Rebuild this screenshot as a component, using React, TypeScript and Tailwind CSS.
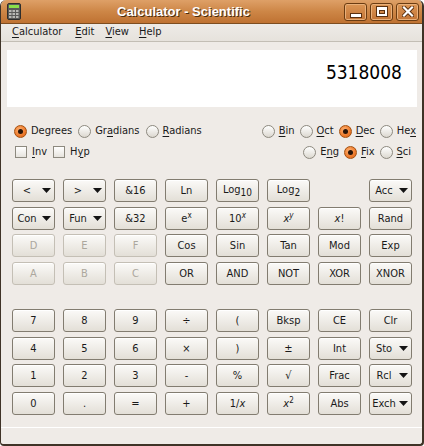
import React from 'react';

// Calculator - Scientific window (GNOME Human theme look)

type Cell = { label: React.ReactNode; dd?: boolean; off?: boolean } | null;

function Mn({ text, at }: { text: string; at: number }) {
  return (
    <span>
      {text.slice(0, at)}
      <span className="underline underline-offset-[2px] decoration-[1px]">{text[at]}</span>
      {text.slice(at + 1)}
    </span>
  );
}

function Sup({ base, exp, italicExp }: { base: React.ReactNode; exp: string; italicExp?: boolean }) {
  return (
    <span className="flex items-start">
      <span>{base}</span>
      <span className={`text-[8px] leading-none -mt-[1px] ${italicExp ? 'italic' : ''}`}>{exp}</span>
    </span>
  );
}

function Sub({ base, sub }: { base: string; sub: string }) {
  return (
    <span className="relative -top-[1px]">
      {base}
      <span className="relative top-[3px] text-[10px]">{sub}</span>
    </span>
  );
}

function Arrow() {
  return (
    <svg width="9" height="5" viewBox="0 0 9 5" className="shrink-0">
      <path d="M0 0h9L4.5 5z" fill="#141414" />
    </svg>
  );
}

function Key({ cell }: { cell: Cell }) {
  if (!cell) return <div />;
  const { label, dd, off } = cell;
  return (
    <div
      className={`h-[23px] rounded-[3px] border flex items-center text-[11px] leading-none bg-linear-to-b from-[#fbfaf8] to-[#e3dfd7] shadow-[inset_0_1px_0_#ffffff] ${
        off ? 'border-[#c4bfb5] text-[#aca79d]' : 'border-[#827c70] text-[#1a1a1a]'
      }`}
    >
      {dd ? (
        <>
          <span className="flex-1 text-center">{label}</span>
          <span className="mr-[3px] ml-[1px] flex"><Arrow /></span>
        </>
      ) : (
        <span className="flex-1 flex justify-center">{label}</span>
      )}
    </div>
  );
}

function Radio({ on }: { on?: boolean }) {
  return on ? (
    <span className="w-[13px] h-[13px] rounded-full border border-[#a4500f] bg-[radial-gradient(circle_at_40%_35%,#ffb273,#ee7a2b_60%,#d6611b)] flex items-center justify-center shrink-0">
      <span className="w-[5px] h-[5px] rounded-full bg-[#2a1408]" />
    </span>
  ) : (
    <span className="w-[13px] h-[13px] rounded-full border border-[#8d897f] bg-linear-to-b from-white to-[#dcd8d0] shrink-0" />
  );
}

function Check() {
  return <span className="w-[12px] h-[12px] border border-[#8d897f] bg-linear-to-b from-white to-[#e6e3dd] shrink-0" />;
}

function Opt({ on, text, at }: { on?: boolean; text: string; at?: number }) {
  return (
    <span className="flex items-center gap-[4px]">
      <Radio on={on} />
      {at === undefined ? <span>{text}</span> : <Mn text={text} at={at} />}
    </span>
  );
}

const X = <span className="italic">x</span>;

const TOP: Cell[] = [
  { label: '<', dd: true }, { label: '>', dd: true }, { label: '&16' }, { label: 'Ln' },
  { label: <Sub base="Log" sub="10" /> }, { label: <Sub base="Log" sub="2" /> }, null, { label: 'Acc', dd: true },
  { label: 'Con', dd: true }, { label: 'Fun', dd: true }, { label: '&32' }, { label: <Sup base="e" exp="x" /> },
  { label: <Sup base="10" exp="x" italicExp /> }, { label: <Sup base={X} exp="y" italicExp /> }, { label: <span>{X}!</span> }, { label: 'Rand' },
  { label: 'D', off: true }, { label: 'E', off: true }, { label: 'F', off: true }, { label: 'Cos' },
  { label: 'Sin' }, { label: 'Tan' }, { label: 'Mod' }, { label: 'Exp' },
  { label: 'A', off: true }, { label: 'B', off: true }, { label: 'C', off: true }, { label: 'OR' },
  { label: 'AND' }, { label: 'NOT' }, { label: 'XOR' }, { label: 'XNOR' },
];

const BOTTOM: Cell[] = [
  { label: '7' }, { label: '8' }, { label: '9' }, { label: '÷' },
  { label: '(' }, { label: 'Bksp' }, { label: 'CE' }, { label: 'Clr' },
  { label: '4' }, { label: '5' }, { label: '6' }, { label: '×' },
  { label: ')' }, { label: '±' }, { label: 'Int' }, { label: 'Sto', dd: true },
  { label: '1' }, { label: '2' }, { label: '3' }, { label: '-' },
  { label: '%' }, { label: '√' }, { label: 'Frac' }, { label: 'Rcl', dd: true },
  { label: '0' }, { label: '.' }, { label: '=' }, { label: '+' },
  { label: <span>1/{X}</span> }, { label: <Sup base={X} exp="2" /> }, { label: 'Abs' }, { label: 'Exch', dd: true },
];

function TitleButton({ children }: { children: React.ReactNode }) {
  return (
    <div className="w-[23px] h-[18px] rounded-[3px] border border-[#6b3c12] shadow-[inset_0_0_0_1px_#e9b07a] bg-linear-to-b from-[#dc9655] to-[#c37536] flex items-center justify-center">
      {children}
    </div>
  );
}

function CalcIcon() {
  return (
    <svg width="14" height="17" viewBox="0 0 14 17">
      <rect x="0.5" y="0.5" width="13" height="16" rx="1.5" fill="#5a5a58" stroke="#2e2e2c" />
      <rect x="2" y="2" width="10" height="3" fill="#8be04a" />
      {[0, 1, 2].map((c) =>
        [0, 1, 2].map((r) => (
          <rect key={`${c}-${r}`} x={2 + c * 3.5} y={7 + r * 3} width="2.5" height="2" fill="#b8b8b4" />
        ))
      )}
    </svg>
  );
}

export default function App() {
  return (
    <div className="w-[424px] h-[446px] overflow-hidden bg-white font-['DejaVu_Sans_Condensed','DejaVu_Sans',sans-serif] text-[11px] text-[#1a1a1a]">
      <div className="h-full flex flex-col rounded-t-[6px] rounded-b-[4px] border-l border-r-2 border-b-2 border-[#3f3327] bg-[#efebe7] overflow-hidden">
        {/* Barre de titre */}
        <div className="h-[24px] shrink-0 relative flex items-center bg-linear-to-b from-[#dea067] via-[#cd8646] to-[#bf7232] border-b border-[#7d4d20]">
          <span className="ml-[6px] flex"><CalcIcon /></span>
          <span className="absolute left-[116px] top-[4px] font-['Liberation_Sans',sans-serif] font-bold text-[13px] leading-[15px] text-white [text-shadow:1px_1px_0_#4a2c10]">
            Calculator - Scientific
          </span>
          <div className="ml-auto mr-[3px] flex gap-[3px]">
            <TitleButton>
              <span className="w-[10px] h-[3px] mt-[7px] bg-white outline outline-1 outline-[#5a3010]" />
            </TitleButton>
            <TitleButton>
              <span className="w-[10px] h-[9px] border-2 border-t-[3px] border-white outline outline-1 outline-[#5a3010] shadow-[inset_0_0_0_1px_#5a3010]" />
            </TitleButton>
            <TitleButton>
              <svg width="12" height="11" viewBox="0 0 12 11">
                <path d="M2 1.5l8 8M10 1.5l-8 8" stroke="#5a3010" strokeWidth="4" strokeLinecap="square" />
                <path d="M2 1.5l8 8M10 1.5l-8 8" stroke="#ffffff" strokeWidth="2.2" strokeLinecap="square" />
              </svg>
            </TitleButton>
          </div>
        </div>

        {/* Menu */}
        <div className="h-[18px] shrink-0 flex items-center border-b border-[#c3beb5] bg-linear-to-b from-[#eeebe7] to-[#e6e2dc]">
          <span className="ml-[11px]"><Mn text="Calculator" at={0} /></span>
          <span className="ml-[13px]"><Mn text="Edit" at={0} /></span>
          <span className="ml-[11px]"><Mn text="View" at={0} /></span>
          <span className="ml-[10px]"><Mn text="Help" at={0} /></span>
        </div>

        {/* Affichage */}
        <div className="mt-[8px] ml-[6px] w-[410px] h-[57px] shrink-0 bg-white flex items-start justify-end pr-[15px] pt-[11px]">
          <span className="text-[19px] leading-[22px] text-black">5318008</span>
        </div>

        {/* Options */}
        <div className="mt-[17px] h-[14px] flex items-center justify-between pl-[13px] pr-[6px]">
          <div className="flex items-center gap-[6px]">
            <Opt on text="Degrees" />
            <Opt text="Gradians" at={2} />
            <Opt text="Radians" at={0} />
          </div>
          <div className="flex items-center gap-[5px]">
            <Opt text="Bin" at={0} />
            <Opt text="Oct" at={0} />
            <Opt on text="Dec" at={0} />
            <Opt text="Hex" at={2} />
          </div>
        </div>
        <div className="mt-[7px] h-[14px] flex items-center justify-between pl-[14px] pr-[11px]">
          <div className="flex items-center gap-[6px]">
            <span className="flex items-center gap-[5px]"><Check /><Mn text="Inv" at={0} /></span>
            <span className="flex items-center gap-[5px]"><Check /><Mn text="Hyp" at={1} /></span>
          </div>
          <div className="flex items-center gap-[5px]">
            <Opt text="Eng" at={1} />
            <Opt on text="Fix" at={0} />
            <Opt text="Sci" at={0} />
          </div>
        </div>

        {/* Touches */}
        <div className="mt-[20px] ml-[11px] w-[400px] grid grid-cols-8 gap-x-[8px] gap-y-[4.7px]">
          {TOP.map((c, i) => <Key key={i} cell={c} />)}
        </div>
        <div className="mt-[24px] ml-[11px] w-[400px] grid grid-cols-8 gap-x-[8px] gap-y-[4.7px]">
          {BOTTOM.map((c, i) => <Key key={i} cell={c} />)}
        </div>

        {/* Barre d'état */}
        <div className="mt-[12px] h-px shrink-0 bg-[#c6c1b8] border-b border-white" />
      </div>
    </div>
  );
}
